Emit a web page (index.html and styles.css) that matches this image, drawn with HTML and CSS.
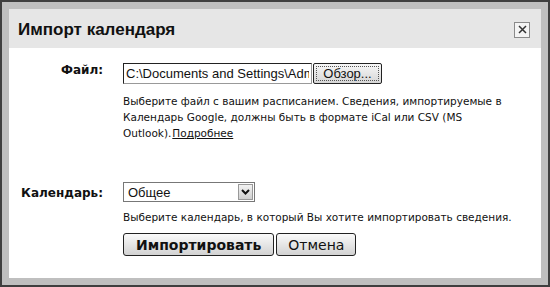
FILE: index.html
```html
<!DOCTYPE html>
<html lang="ru">
<head>
    <meta charset="UTF-8">
    <title>Импорт календаря</title>
    <link rel="stylesheet" href="styles.css">
</head>
<body>
    <div class="frame">
        <div class="dialog">
            <div class="dialog-header">
                <h1>Импорт календаря</h1>
                <span class="close-box">
                    <svg width="11" height="11" viewBox="0 0 11 11">
                        <path d="M2 2 L9 9 M9 2 L2 9" stroke="#333" stroke-width="1.5" fill="none"/>
                    </svg>
                </span>
            </div>
            <div class="dialog-body">
                <div class="form-row file-row">
                    <label class="field-label">Файл:</label>
                    <div class="field">
                        <div class="file-picker">
                            <input type="text" class="file-input" value="C:\Documents and Settings\Admin\Мои документы\calendar.ics">
                            <button class="browse-button">Обзор...</button>
                        </div>
                        <p class="hint">Выберите файл с вашим расписанием. Сведения, импортируемые в Календарь Google, должны быть в формате iCal или CSV (MS Outlook).<a href="#">Подробнее</a></p>
                    </div>
                </div>
                <div class="form-row calendar-row">
                    <label class="field-label">Календарь:</label>
                    <div class="field">
                        <div class="select-box">
                            <span class="select-value">Общее</span>
                            <span class="select-arrow">
                                <svg width="9" height="6" viewBox="0 0 9 6">
                                    <path d="M1 1 L4.5 4.5 L8 1" stroke="#111" stroke-width="2" fill="none"/>
                                </svg>
                            </span>
                        </div>
                        <p class="hint single-line">Выберите календарь, в который Вы хотите импортировать сведения.</p>
                    </div>
                </div>
                <div class="form-row">
                    <span></span>
                    <div class="actions">
                        <button class="button primary">Импортировать</button>
                        <button class="button">Отмена</button>
                    </div>
                </div>
            </div>
        </div>
    </div>
</body>
</html>
```

FILE: styles.css
```css
body {
    margin: 0;
    font-family: "DejaVu Sans", sans-serif;
    background-color: #3f3f3f;
}

.frame {
    border: 2px solid #3f3f3f;
    padding: 7px;
    box-sizing: border-box;
    height: 287px;
    background-color: #bfbfbf;
}

.dialog {
    height: 100%;
    background-color: #fff;
    display: flex;
    flex-direction: column;
}

.dialog-header {
    height: 39px;
    background-color: #e6e6e6;
    display: flex;
    align-items: center;
    justify-content: space-between;
    padding: 0 11px 0 9px;
}

.dialog-header h1 {
    margin: 2px 0 0 0;
    font-family: "Liberation Sans", Arial, sans-serif;
    font-size: 17px;
    font-weight: bold;
    color: #111;
}

.close-box {
    width: 14px;
    height: 14px;
    border: 1px solid #8a8a8a;
    background-color: #f4f4f4;
    display: flex;
    align-items: center;
    justify-content: center;
    margin-top: 2px;
}

.dialog-body {
    padding-top: 15px;
}

.form-row {
    display: grid;
    grid-template-columns: 94px 1fr;
    column-gap: 20px;
}

.field-label {
    text-align: right;
    font-size: 12px;
    font-weight: bold;
    color: #111;
}

.calendar-row {
    margin-top: 41px;
}

.calendar-row .field-label {
    padding-top: 4px;
}

.file-picker {
    display: flex;
    height: 21px;
}

.file-input {
    width: 189px;
    height: 21px;
    box-sizing: border-box;
    margin: 0;
    padding: 0 2px;
    border: 1px solid #222;
    border-right-color: #999;
    border-bottom-color: #999;
    font-family: "Liberation Sans", Arial, sans-serif;
    font-size: 13px;
    color: #111;
}

.browse-button {
    margin-left: 1px;
    width: 69px;
    height: 21px;
    padding: 0;
    border: 1px solid #222;
    border-radius: 2px;
    background: linear-gradient(#f7f7f7, #d6d6d6);
    font-family: "Liberation Sans", Arial, sans-serif;
    font-size: 13px;
    color: #111;
    outline: 1px dotted #555;
    outline-offset: -4px;
}

.hint {
    margin: 9px 0 0 0;
    width: 395px;
    font-size: 10.5px;
    line-height: 16px;
    color: #111;
}

.hint.single-line {
    width: auto;
    white-space: nowrap;
    margin-top: 7px;
}

.hint a {
    color: #111;
    margin-left: 1px;
}

.select-box {
    width: 132px;
    height: 20px;
    box-sizing: border-box;
    border: 1px solid #777;
    display: flex;
    align-items: center;
    justify-content: space-between;
    font-family: "Liberation Sans", Arial, sans-serif;
    font-size: 13px;
    color: #111;
}

.select-value {
    padding-left: 4px;
}

.select-arrow {
    width: 15px;
    height: 16px;
    margin-right: 1px;
    border: 1px solid #999;
    box-sizing: border-box;
    background: linear-gradient(#f2f2f2, #cfcfcf);
    display: flex;
    align-items: center;
    justify-content: center;
}

.actions {
    display: flex;
    gap: 2px;
    margin-top: 8px;
}

.button {
    height: 23px;
    padding: 0 11px;
    border: 1px solid #222;
    border-radius: 3px;
    background: linear-gradient(#fafafa, #d2d2d2);
    font-family: "DejaVu Sans", sans-serif;
    font-size: 14px;
    color: #111;
}

.button.primary {
    font-weight: bold;
    padding: 0 12px;
}
```
